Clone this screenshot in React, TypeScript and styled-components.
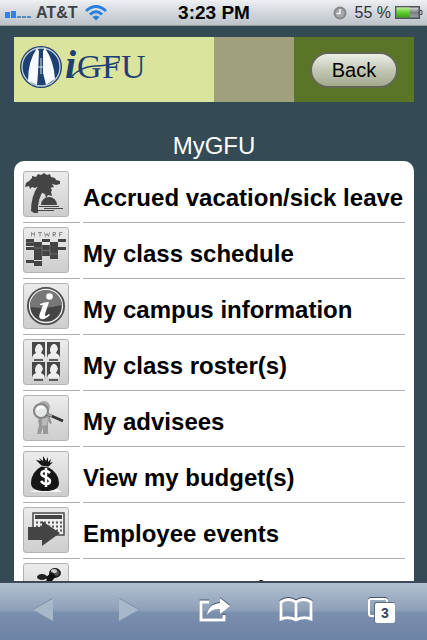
import React from "react";
import styled, { createGlobalStyle } from "styled-components";

const Global = createGlobalStyle`
  * { box-sizing: border-box; }
  body { margin: 0; background: #344a54; font-family: "Liberation Sans", Arial, sans-serif; }
`;

const Screen = styled.div`
  display: flex;
  flex-direction: column;
  height: 100vh;
  overflow: hidden;
`;

const StatusBar = styled.header`
  display: grid;
  grid-template-columns: 1fr auto 1fr;
  align-items: center;
  flex: none;
  height: 26px;
  padding: 0 4px 0 5px;
  background: linear-gradient(#eef0f2, #d3d8dc 50%, #bdc4ca);
  border-bottom: 1px solid #8d989f;
  color: #3f4347;
  font-size: 16px;
  line-height: 24px;
`;

const StatusGroup = styled.div<{ $end?: boolean }>`
  display: flex;
  align-items: center;
  gap: 4px;
  justify-content: ${(p) => (p.$end ? "flex-end" : "flex-start")};
  svg { flex: none; display: block; }
`;

const Carrier = styled.span`
  margin-right: 4px;
  font-weight: bold;
`;

const Clock = styled.time`
  color: #000;
  font-size: 19px;
  font-weight: bold;
`;

const Percent = styled.span`
  margin-left: 4px;
  color: #2f3337;
`;

const Page = styled.main`
  flex: 1;
  min-height: 0;
  overflow: hidden;
  padding: 11px 13px 0 14px;
`;

const Banner = styled.div`
  display: grid;
  grid-template-columns: 5fr 2fr 3fr;
  height: 65px;
`;

const BannerPart = styled.div<{ $color: string }>`
  display: flex;
  align-items: center;
  background: ${(p) => p.$color};
`;

const LogoBox = styled(BannerPart)`
  align-items: flex-start;
  padding: 6px 4px;
`;

const ButtonBox = styled(BannerPart)`
  justify-content: center;
`;

const BackButton = styled.button`
  width: 88px;
  height: 36px;
  padding: 0;
  border: 2px solid #626853;
  border-radius: 18px;
  background: linear-gradient(#eceee6, #c3c8b6 50%, #a2aa8e);
  color: #000;
  font: 20px/30px "Liberation Sans", Arial, sans-serif;
`;

const Title = styled.h1`
  margin: 29px 0 1px;
  color: #fff;
  font-size: 24px;
  font-weight: normal;
  line-height: 29px;
  text-align: center;
`;

const Card = styled.ul`
  list-style: none;
  margin: 0;
  padding: 6px 9px;
  border-radius: 10px;
  background: #fff;
`;

const Row = styled.li`
  height: 56px;
`;

const RowLink = styled.a`
  display: grid;
  grid-template-columns: 57px 1fr;
  gap: 3px;
  height: 100%;
  color: #000;
  text-decoration: none;
`;

const Cell = styled.span`
  display: flex;
  align-items: flex-start;
  padding-top: 4px;
  border-bottom: 1px solid #adadad;
`;

const Label = styled(Cell)`
  align-items: center;
  padding-top: 6px;
  font-size: 24px;
  font-weight: bold;
  line-height: 26px;
  white-space: nowrap;
`;

const Tile = styled.span`
  display: block;
  width: 46px;
  height: 46px;
  border: 1px solid #b2b2b2;
  border-radius: 3px;
  background: linear-gradient(#ececec, #cdcdcd);
  svg { display: block; width: 44px; height: 44px; }
`;

const Toolbar = styled.nav`
  display: grid;
  grid-template-columns: 86fr 86fr 86fr 76fr 93fr;
  flex: none;
  height: 59px;
  border-top: 2px solid #3d4a5b;
  background: linear-gradient(#b3c0cf, #8d9fb8 48%, #7b8fae 52%, #6c82a4);
`;

const ToolButton = styled.button`
  display: flex;
  align-items: center;
  justify-content: center;
  padding: 0 0 3px;
  border: 0;
  background: none;
  color: #fff;
  svg { display: block; }
`;

const Signal = () => (
  <svg width="27" height="12" viewBox="0 0 27 12">
    <path d="M0 5h5v6H0zM6 4h5v7H6z" fill="#2f82e8" />
    <path d="M12 9h4v2h-4zM17 9h4v2h-4zM22 9h4v2h-4z" fill="#5789c6" />
  </svg>
);

const Wifi = () => (
  <svg width="22" height="16" viewBox="0 0 22 16" fill="none" stroke="#277fe2" strokeWidth="3">
    <path d="M1 6Q11-3 21 6M5 9.500Q11 4 17 9.500" />
    <path d="M7.500 12Q11 9 14.500 12L11 15.500Z" fill="#277fe2" stroke="none" />
  </svg>
);

const Alarm = () => (
  <svg width="14" height="14" viewBox="0 0 14 14">
    <circle cx="7" cy="7" r="6.500" fill="#85898c" />
    <circle cx="7" cy="7" r="4.500" fill="#a3a7aa" />
    <path d="M7 3v4.500H3.500" fill="none" stroke="#f5f5f5" strokeWidth="1.500" />
  </svg>
);

const Battery = () => (
  <svg width="28" height="13" viewBox="0 0 28 13">
    <defs>
      <linearGradient id="charge" x2="0" y2="1">
        <stop stopColor="#b8ef94" /><stop offset=".5" stopColor="#60d02e" /><stop offset="1" stopColor="#3b9e14" />
      </linearGradient>
      <linearGradient id="empty" x2="0" y2="1">
        <stop stopColor="#e2e4e6" /><stop offset=".5" stopColor="#7b7f83" /><stop offset="1" stopColor="#a0a4a8" />
      </linearGradient>
    </defs>
    <rect x=".8" y=".8" width="23.500" height="11.400" fill="url(#empty)" stroke="#4c5054" strokeWidth="1.500" />
    <rect x="1.500" y="1.500" width="13" height="10" fill="url(#charge)" />
    <path d="M25 4.500h2v4h-2" fill="#bbb" stroke="#4c5054" />
  </svg>
);

const LogoSvg = styled.svg`
  display: block;
  flex: none;
  text { font-family: "Liberation Serif", "Times New Roman", serif; }
`;

const Logo = () => (
  <LogoSvg width="130" height="48" viewBox="0 0 130 48" role="img" aria-label="iGFU">
    <circle cx="23" cy="24" r="21" fill="#1c3f74" />
    <circle cx="23" cy="24" r="19" fill="none" stroke="#c3d0d4" strokeWidth="1.300" />
    <path d="M19 5Q10 18 10 38l9 4 1-12 1-22zM27 5Q36 18 37 36l-9 6-3-12V8z" fill="#f7faff" />
    <path d="M23 15v16" stroke="#1c3f74" strokeWidth="4" />
    <path d="M20 24h6M23 15v16" stroke="#dce6ee" strokeWidth="1" />
    <g fill="#1d3f72">
      <text x="47" y="35" fontSize="40" fontStyle="italic" fontWeight="bold">i</text>
      <text x="59" y="35" fontSize="34">G</text>
      <text x="84" y="35" fontSize="34">F</text>
      <text x="103" y="35" fontSize="34">U</text>
    </g>
    <path d="M54 33Q63 24 76 23q14 0 25-4" fill="none" stroke="#1d3f72" strokeWidth="1.500" />
  </LogoSvg>
);

const Palm = () => (
  <svg viewBox="0 0 44 44" fill="#444">
    <path d="M14 14Q7 24 7 39l3 2h4q-1-15 7-25l-2-6z" />
    <path d="M5 9l3-3V4l4 1 2-3 3 1 3-2 3 2 3-1 1 3 4 1 1 2 4 1v3l-4 1-4-1 2 3-4 1-1-2 3 4-1 2 1 4-4-1-2 3-1-4-3-1 1-5-4-2-4 2-3-1-2 2-1-3-4 1 1-4z" />
    <path d="M17 33a8 8 0 0 1 16 0zM15 34h20v1H15zM20 36h19v1H20zM14 38h16v1H14z" />
  </svg>
);

const ScheduleIcon = () => (
  <svg viewBox="0 0 44 44" fill="#444">
    <path d="M7.500 8.500v-4l1.500 2 1.500-2v4M14 4.500h4M16 4.500v4M20.500 4.500l1 4 1.500-3 1.500 3 1-4M29 8.500v-4h2.500v2H29l2.500 2M35.500 8.500v-4h3M35.500 6.500h2" fill="none" stroke="#777" strokeWidth=".8" />
    <path d="M2 11h8v7H2zM2 19h8v3H2zM2 32h8v3H2zM10 14h8v15h-8zM10 29h8v3h-8zM10 33h8v5h-8zM18 11h8v3h-8zM18 17h8v11h-8zM26 14h8v17h-8zM34 11h8v3h-8zM34 19h8v3h-8z" />
    <path d="M2 14.500h8M10 20h8M18 22.500h8M26 26h8M18 17v11M26 17v11" stroke="#888" strokeWidth=".6" />
  </svg>
);

const InfoIcon = () => (
  <svg viewBox="0 0 44 44">
    <circle cx="22" cy="22" r="18" fill="#454545" stroke="#505050" strokeWidth="2" />
    <circle cx="22" cy="22" r="16.500" fill="none" stroke="#f2f2f2" strokeWidth="1.300" />
    <path d="M6 23a16 16 0 0 1 32-2Q24 25 6 23z" fill="#777" />
    <circle cx="25.500" cy="12.500" r="3.300" fill="#fff" />
    <path d="M16 20q4-2 9-2l-4 12q-1 4 4 0l1 1q-5 5-9 4-3-1-1-6l3-8h-3z" fill="#fff" />
  </svg>
);

const people = [[8, 2], [23, 2], [8, 22], [23, 22]];

const RosterIcon = () => (
  <svg viewBox="0 0 44 44">
    {people.map(([x, y]) => (
      <g key={`${x}-${y}`} transform={`translate(${x} ${y})`}>
        <path d="M0 0h13v16H0z" fill="#484848" />
        <path d="M3 7l1-3 2-2h2l2 2 1 3-1 2-1 2 3 2 1 3H0l1-3 3-2-1-2z" fill="#eee" />
        <path d="M2 18h9" stroke="#333" strokeWidth="1.500" />
      </g>
    ))}
  </svg>
);

const SearchIcon = () => (
  <svg viewBox="0 0 44 44">
    <circle cx="20" cy="11" r="6" fill="#aaa" />
    <path d="M16 19h9l3 8-2 1-2-3v12l1 1h-6v-7l-2 7h-4l2-9-1-4z" fill="#999" />
    <path d="M18 21l6 1-1 7-5 1z" fill="#bbb" />
    <circle cx="17" cy="15" r="7" fill="#e6e8e8" stroke="#858585" strokeWidth="2" />
    <path d="M13 14q2-4 7-2" stroke="#fff" strokeWidth="2" fill="none" />
    <path d="M23 18l16 7" stroke="#333" strokeWidth="3" />
    <path d="M23 18l5 2" stroke="#aaa" strokeWidth="2" />
  </svg>
);

const MoneyIcon = () => (
  <svg viewBox="0 0 44 44">
    <path d="M6 40h32l-5-3H12z" fill="#f7f7f7" />
    <path d="M18 14L12 8l5 1-2-3 4 3V4l3 5 2-4v5l3-3-1 4 3-1-5 5q11 6 11 16 0 8-14 8T7 31q0-11 11-17z" fill="#151515" />
    <path d="M17 14l8 1" stroke="#bbb" />
    <path d="M26 21q-4-4-8-1c-3 6 8 4 8 9 0 4-6 4-9 0M22 16v19" fill="none" stroke="#fff" strokeWidth="2.500" />
  </svg>
);

const EventsIcon = () => (
  <svg viewBox="0 0 44 44">
    <path d="M9 5h31v22H9z" fill="#eee" stroke="#4b4b4b" strokeWidth="1.500" />
    <path d="M11 7h27v4H11z" fill="#444" />
    <path d="M12 14.500h27M12 18.500h27M12 22.500h27" stroke="#555" strokeWidth="2" strokeDasharray="2 2" />
    <path d="M4 19h14v-6l18 12-18 13v-6H4z" fill="#444" />
  </svg>
);

const ReportIcon = () => (
  <svg viewBox="0 0 44 44">
    <ellipse cx="18" cy="13" rx="5" ry="3" fill="#222" />
    <ellipse cx="31" cy="9" rx="5" ry="4" fill="#555" stroke="#222" strokeWidth="2" />
    <ellipse cx="30" cy="7" rx="3" ry="2" fill="#ccc" />
    <path d="M21 14l7-6 4 4-7 9h-5l3-6z" fill="#111" />
    <path d="M20 19l8 16M25 19l-8 16" stroke="#333" strokeWidth="3" />
  </svg>
);

const items = [
  { label: "Accrued vacation/sick leave", Icon: Palm },
  { label: "My class schedule", Icon: ScheduleIcon },
  { label: "My campus information", Icon: InfoIcon },
  { label: "My class roster(s)", Icon: RosterIcon },
  { label: "My advisees", Icon: SearchIcon },
  { label: "View my budget(s)", Icon: MoneyIcon },
  { label: "Employee events", Icon: EventsIcon },
  { label: "Expense reporting", Icon: ReportIcon },
];

const Prev = () => (
  <svg width="22" height="26" viewBox="0 0 22 26"><path d="M21 1v23L1 12.500z" fill="#a8b8cb" /><path d="M1 12.500L21 1" stroke="#7e91a9" /></svg>
);
const Next = () => (
  <svg width="22" height="26" viewBox="0 0 22 26"><path d="M1 1v23l20-11.500z" fill="#a8b8cb" /><path d="M1 1l20 11.500" stroke="#7e91a9" /></svg>
);

const Share = () => (
  <svg width="32" height="28" viewBox="0 0 32 28">
    <path d="M10 5H2v19h23v-6" fill="none" stroke="#46566c" strokeWidth="3" />
    <path d="M10 6H2v18h23v-5" fill="none" stroke="#fff" strokeWidth="3" />
    <path d="M21 1l10 8-10 9v-5q-8-1-13 6Q9 7 21 6z" fill="#46566c" />
    <path d="M21 2l10 8-10 8v-5q-8-1-13 6Q9 8 21 7z" fill="#fff" />
  </svg>
);

const Book = () => (
  <svg width="34" height="26" viewBox="0 0 34 26" fill="none" strokeWidth="3">
    <path d="M17 4Q9-1 2 4v18q8-3 15 1 7-4 15-1V4q-7-5-15 0v18" stroke="#46566c" />
    <path d="M17 5Q9 0 2 5v17q8-3 15 1 7-4 15-1V5q-7-5-15 0v18" stroke="#fff" />
  </svg>
);

const Pages = () => (
  <svg width="28" height="28" viewBox="0 0 28 28">
    <rect x="2" y="2" width="18" height="18" rx="2" fill="none" stroke="#46566c" strokeWidth="2" />
    <rect x="2" y="3" width="18" height="17" rx="2" fill="none" stroke="#fff" strokeWidth="2" />
    <rect x="7" y="6" width="21" height="21" rx="3" fill="#58687e" />
    <rect x="8" y="7" width="20" height="20" rx="2" fill="#fff" />
    <text x="18" y="22" textAnchor="middle" fontSize="14" fontWeight="bold" fontFamily="Liberation Sans, Arial, sans-serif" fill="#34445e">3</text>
  </svg>
);

export default function App() {
  return (
    <Screen>
      <Global />
      <StatusBar>
        <StatusGroup><Signal /><Carrier>AT&amp;T</Carrier><Wifi /></StatusGroup>
        <Clock>3:23 PM</Clock>
        <StatusGroup $end><Alarm /><Percent>55 %</Percent><Battery /></StatusGroup>
      </StatusBar>
      <Page>
        <Banner>
          <LogoBox $color="#dbe49c"><Logo /></LogoBox>
          <BannerPart $color="#a1a07c" />
          <ButtonBox $color="#5a7528"><BackButton>Back</BackButton></ButtonBox>
        </Banner>
        <Title>MyGFU</Title>
        <Card>
          {items.map(({ label, Icon }) => (
            <Row key={label}>
              <RowLink href="#">
                <Cell><Tile><Icon /></Tile></Cell>
                <Label>{label}</Label>
              </RowLink>
            </Row>
          ))}
        </Card>
      </Page>
      <Toolbar>
        <ToolButton aria-label="Previous page"><Prev /></ToolButton>
        <ToolButton aria-label="Next page"><Next /></ToolButton>
        <ToolButton aria-label="Share"><Share /></ToolButton>
        <ToolButton aria-label="Bookmarks"><Book /></ToolButton>
        <ToolButton aria-label="Open pages"><Pages /></ToolButton>
      </Toolbar>
    </Screen>
  );
}
